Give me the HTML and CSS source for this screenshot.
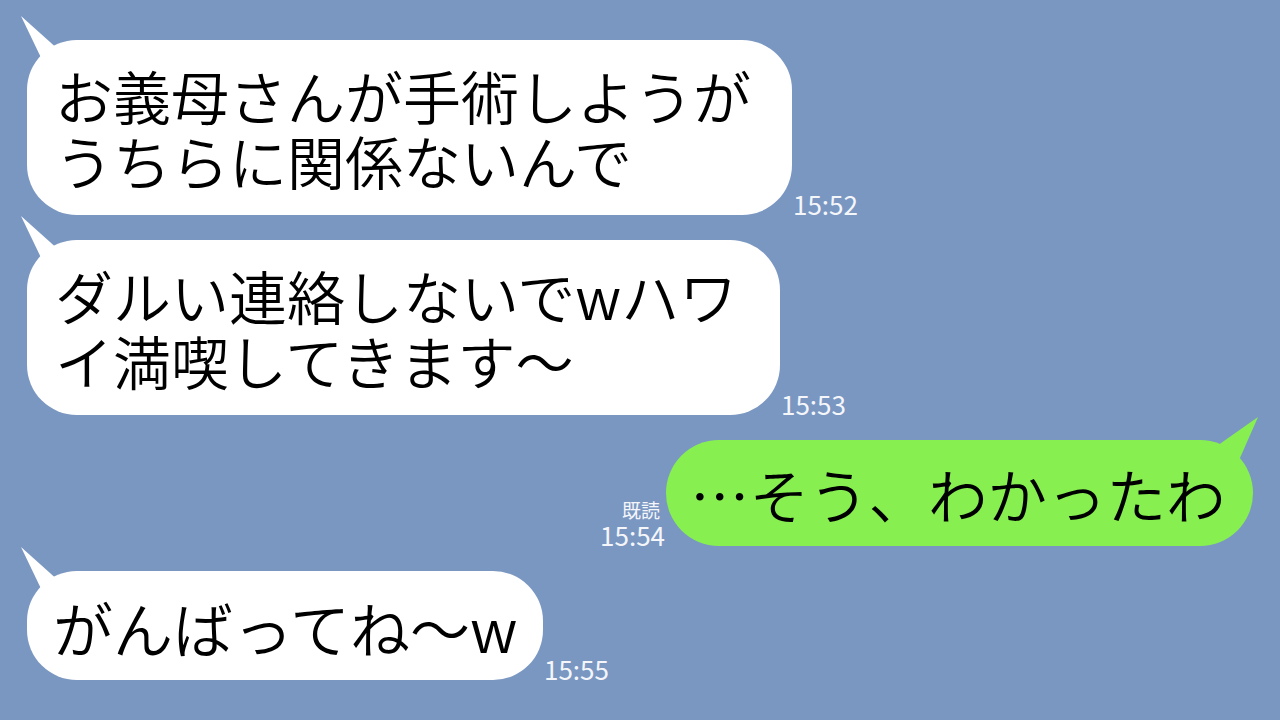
FILE: index.html
```html
<!DOCTYPE html>
<html lang="ja">
<head>
<meta charset="utf-8">
<title>chat</title>
<link rel="stylesheet" href="styles.css">
</head>
<body>
<div class="chat">
  <div class="row">
    <div class="bubble them b1">お義母さんが手術しようが<br>うちらに関係ないんで</div>
    <div class="meta"><span class="time">15:52</span></div>
  </div>
  <div class="row">
    <div class="bubble them b2">ダルい連絡しないでwハワ<br>イ満喫してきます〜</div>
    <div class="meta"><span class="time">15:53</span></div>
  </div>
  <div class="row me">
    <div class="meta mine"><span class="read">既読</span><span class="time">15:54</span></div>
    <div class="bubble mine-bubble">…そう、わかったわ</div>
  </div>
  <div class="row">
    <div class="bubble them b4">がんばってね〜w</div>
    <div class="meta"><span class="time">15:55</span></div>
  </div>
</div>
</body>
</html>
```
FILE: styles.css
```css
html, body {
  margin: 0;
  padding: 0;
}
body {
  width: 1280px;
  height: 720px;
  overflow: hidden;
  background: #7a97c2;
  font-family: "Noto Sans CJK JP", "Noto Sans", sans-serif;
}
.chat {
  display: flex;
  flex-direction: column;
  gap: 25px;
  padding: 40px 27px 0 27px;
}
.row {
  display: flex;
  align-items: flex-end;
}
.row.me {
  justify-content: flex-end;
}
.bubble {
  position: relative;
  box-sizing: border-box;
  font-size: 58px;
  font-weight: 350;
  line-height: 65px;
  color: #000;
  white-space: nowrap;
  border-radius: 50px;
}
.them {
  background: #fff;
  padding: 23px 0 22px 28px;
}
.b1 { width: 765px; }
.b2 { width: 753px; }
.b4 {
  width: 516px;
  font-size: 60px;
  padding: 23px 0 21px 26px;
}
.them::before {
  content: "";
  position: absolute;
  left: -6px;
  top: -24px;
  width: 40px;
  height: 50px;
  background: #fff;
  clip-path: polygon(0 0, 39px 35px, 24px 50px);
}
.mine-bubble {
  width: 587px;
  font-size: 59.5px;
  background: #87f050;
  padding: 21px 0 20px 24px;
  border-radius: 53px;
}
.mine-bubble::after {
  content: "";
  position: absolute;
  right: -5px;
  top: -23px;
  width: 44px;
  height: 50px;
  background: #87f050;
  clip-path: polygon(44px 0, 0 31px, 22px 50px);
}
.meta {
  display: flex;
  flex-direction: column;
  align-items: flex-start;
  color: #f4f6fa;
  margin-bottom: -2px;
  padding-left: 1px;
}
.meta.mine {
  align-items: flex-end;
  padding-left: 0;
  padding-right: 1px;
}
.time {
  font-size: 26px;
  line-height: 26px;
}
.read {
  font-size: 19px;
  line-height: 22px;
  margin-right: 5px;
  margin-bottom: 1px;
}
```
